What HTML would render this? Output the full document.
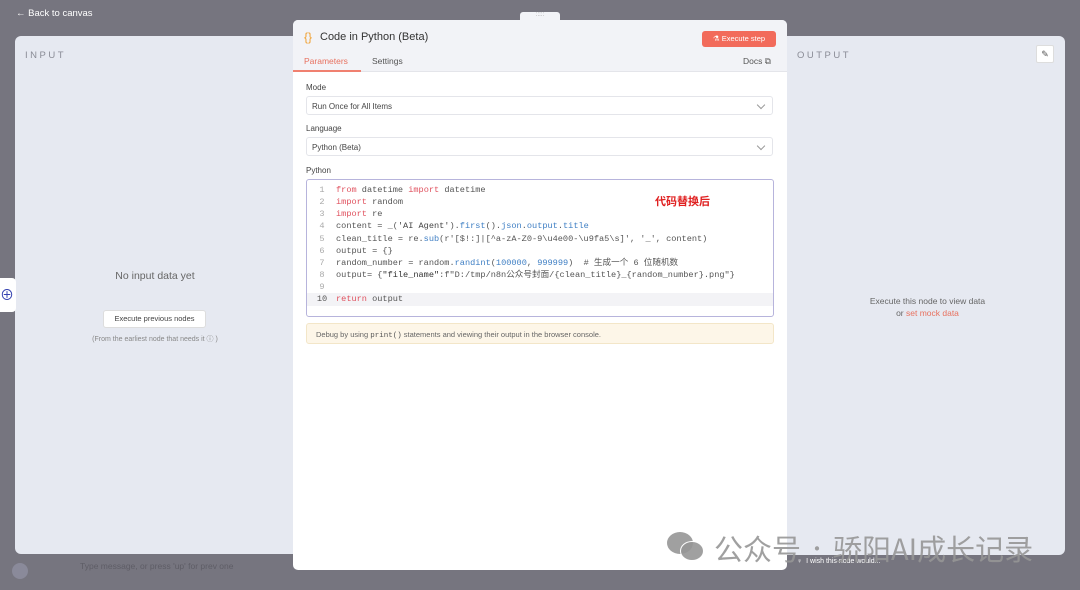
<!DOCTYPE html>
<html><head><meta charset="utf-8"><style>
*{margin:0;padding:0;box-sizing:border-box}
body{width:1080px;height:590px;background:#76757f;font-family:"Liberation Sans","Noto Sans CJK SC",sans-serif;position:relative;overflow:hidden}
.abs{position:absolute}
.panel{background:#e6e9f1;border-radius:6px}
.lbl{font-size:9.5px;letter-spacing:2.5px;color:#8a8c96}
.mono{font-family:"Liberation Mono","Noto Sans CJK SC",monospace;font-size:8.6px;color:#555}
.kw{color:#e0525f}.fn{color:#3f7fc4}.st{color:#444}.nm{color:#3f7fc4}
.ln{position:absolute;left:8px;width:14px;text-align:center;color:#aaa;line-height:11px}
.cl{position:absolute;left:29px;white-space:pre;line-height:11px}
.sel{position:absolute;left:13px;width:467px;height:19px;border:1px solid #e4e5ea;border-radius:3px;font-size:8px;color:#444;padding:5px 5px}
.sel:after{content:"";position:absolute;right:8px;top:5px;width:5px;height:5px;border-right:1px solid #999;border-bottom:1px solid #999;transform:rotate(45deg)}
.fl{position:absolute;left:13px;font-size:8px;color:#444}
</style></head><body>
<div class="abs" style="left:16px;top:8px;color:#fff;font-size:9.5px">← Back to canvas</div>
<div class="abs" style="left:520px;top:12px;width:40px;height:10px;background:#f3f4f8;border-radius:3px 3px 0 0;font-size:6px;color:#999;text-align:center">:::::</div>

<div class="abs panel" style="left:15px;top:36px;width:285px;height:518px">
 <div class="abs lbl" style="left:10px;top:14px">INPUT</div>
 <div class="abs" style="left:0;width:280px;top:234px;text-align:center;font-size:10.5px;color:#666">No input data yet</div>
 <div class="abs" style="left:88px;top:274px;width:103px;height:18px;background:#fff;border:1px solid #ddd;border-radius:3px;font-size:7.5px;color:#444;text-align:center;line-height:16px">Execute previous nodes</div>
 <div class="abs" style="left:0;width:280px;top:298px;text-align:center;font-size:7px;color:#888">(From the earliest node that needs it ⓘ )</div>
</div>
<div class="abs" style="left:0;top:278px;width:16px;height:34px;background:#fff;border-radius:0 4px 4px 0;color:#3340b0;font-size:14px;line-height:34px">⊕</div>

<div class="abs panel" style="left:780px;top:36px;width:285px;height:519px">
 <div class="abs lbl" style="left:17px;top:14px">OUTPUT</div>
 <div class="abs" style="left:256px;top:9px;width:18px;height:18px;background:#fff;border:1px solid #ddd;border-radius:2px;font-size:9px;color:#555;text-align:center;line-height:16px">✎</div>
 <div class="abs" style="left:0;width:295px;top:259px;text-align:center;font-size:8.5px;color:#666;line-height:12px">Execute this node to view data<br>or <span style="color:#e8715f">set mock data</span></div>
</div>

<div class="abs" style="left:80px;top:561px;font-size:8.5px;color:#5e5d66">Type message, or press 'up' for prev one</div>
<div class="abs" style="left:12px;top:563px;width:16px;height:16px;border-radius:50%;background:#8a8a9a"></div>
<div class="abs" style="left:797px;top:558px;font-size:7px;color:#fff">♀ &nbsp;I wish this node would...</div>

<div class="abs" style="left:293px;top:20px;width:494px;height:550px;background:#fff;border-radius:5px;overflow:hidden">
 <div class="abs" style="left:0;top:0;width:494px;height:52px;background:#f2f3f7;border-bottom:1px solid #e4e5ea"></div>
 <div class="abs" style="left:11px;top:10px;font-size:12px;color:#f0a030">{}</div>
 <div class="abs" style="left:27px;top:11px;font-size:11px;color:#333">Code in Python (Beta)</div>
 <div class="abs" style="left:409px;top:11px;width:74px;height:16px;background:#f26b5b;border-radius:3px;color:#fff;font-size:7.5px;text-align:center;line-height:16px">⚗ Execute step</div>
 <div class="abs" style="left:11px;top:36px;font-size:8.5px;color:#e8715f">Parameters</div>
 <div class="abs" style="left:0;top:50px;width:68px;height:2px;background:#f08070"></div>
 <div class="abs" style="left:79px;top:36px;font-size:8.5px;color:#555">Settings</div>
 <div class="abs" style="left:450px;top:36px;font-size:8.5px;color:#555">Docs ⧉</div>

 <div class="fl" style="top:63px">Mode</div>
 <div class="sel" style="top:76px">Run Once for All Items</div>
 <div class="fl" style="top:104px">Language</div>
 <div class="sel" style="top:117px">Python (Beta)</div>
 <div class="fl" style="top:146px">Python</div>
 <div class="abs mono" style="left:13px;top:159px;width:468px;height:138px;border:1px solid #b7b4dc;border-radius:3px">
  <div class="abs" style="left:0;top:113px;width:466px;height:13px;background:#f3f3f6"></div>
  <div class="ln" style="top:5px">1</div><div class="cl" style="top:5px"><span class="kw">from</span> datetime <span class="kw">import</span> datetime</div>
  <div class="ln" style="top:17px">2</div><div class="cl" style="top:17px"><span class="kw">import</span> random</div>
  <div class="ln" style="top:29px">3</div><div class="cl" style="top:29px"><span class="kw">import</span> re</div>
  <div class="ln" style="top:41px">4</div><div class="cl" style="top:41px">content = _(<span class="st">'AI Agent'</span>).<span class="fn">first</span>().<span class="fn">json</span>.<span class="fn">output</span>.<span class="fn">title</span></div>
  <div class="ln" style="top:54px">5</div><div class="cl" style="top:54px">clean_title = re.<span class="fn">sub</span>(r'[$!:]|[^a-zA-Z0-9\u4e00-\u9fa5\s]', '_', content)</div>
  <div class="ln" style="top:66px">6</div><div class="cl" style="top:66px">output = {}</div>
  <div class="ln" style="top:78px">7</div><div class="cl" style="top:78px">random_number = random.<span class="fn">randint</span>(<span class="nm">100000</span>, <span class="nm">999999</span>)  # 生成一个 6 位随机数</div>
  <div class="ln" style="top:90px">8</div><div class="cl" style="top:90px">output= {<span style="color:#333">"file_name"</span>:f"D:/tmp/n8n公众号封面/{clean_title}_{random_number}.png"}</div>
  <div class="ln" style="top:102px">9</div>
  <div class="ln" style="top:114px;color:#555">10</div><div class="cl" style="top:114px"><span class="kw">return</span> output</div>
  <div class="abs" style="left:348px;top:13px;font-family:'Noto Sans CJK SC',sans-serif;font-size:11px;font-weight:bold;color:#e02020">代码替换后</div>
 </div>
 <div class="abs" style="left:13px;top:303px;width:468px;height:21px;background:#fdf6e8;border:1px solid #f3e6c8;border-radius:3px;font-size:7.5px;color:#666;padding:6px 9px">Debug by using <span class="mono" style="font-size:7.5px">print()</span> statements and viewing their output in the browser console.</div>
</div>

<div class="abs" style="left:667px;top:532px;width:26px;height:22px;border-radius:50%;background:rgba(150,150,150,0.9)"></div>
<div class="abs" style="left:680px;top:541px;width:24px;height:20px;border-radius:50%;background:rgba(150,150,150,0.9);border:1px solid #fff"></div>
<div class="abs" style="left:714px;top:527px;font-size:29px;color:rgba(150,150,150,0.9);font-family:'Noto Sans CJK SC',sans-serif;white-space:nowrap">公众号<span style="font-size:20px;margin:0 6px;vertical-align:4px">·</span>骄阳AI成长记录</div>
</body></html>
